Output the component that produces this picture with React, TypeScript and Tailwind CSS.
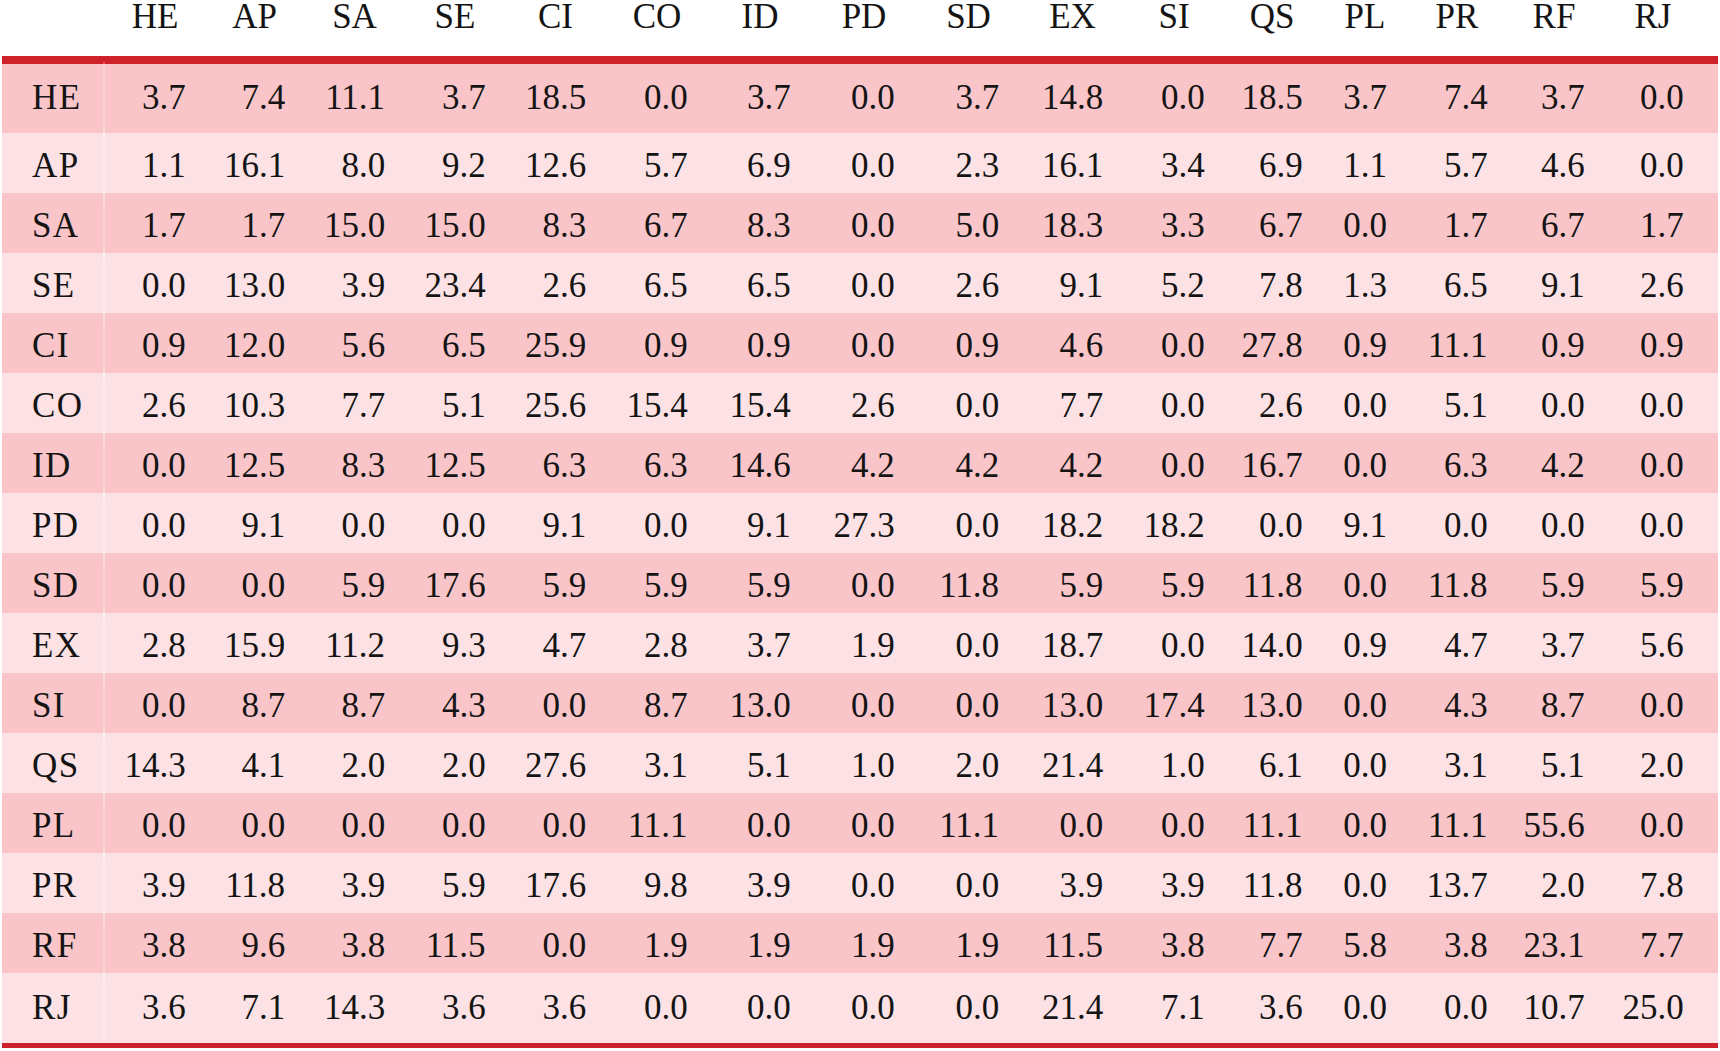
const codes = ['HE', 'AP', 'SA', 'SE', 'CI', 'CO', 'ID', 'PD', 'SD', 'EX', 'SI', 'QS', 'PL', 'PR', 'RF', 'RJ'];

const rows: [string, string[]][] = [
  ['HE', ['3.7', '7.4', '11.1', '3.7', '18.5', '0.0', '3.7', '0.0', '3.7', '14.8', '0.0', '18.5', '3.7', '7.4', '3.7', '0.0']],
  ['AP', ['1.1', '16.1', '8.0', '9.2', '12.6', '5.7', '6.9', '0.0', '2.3', '16.1', '3.4', '6.9', '1.1', '5.7', '4.6', '0.0']],
  ['SA', ['1.7', '1.7', '15.0', '15.0', '8.3', '6.7', '8.3', '0.0', '5.0', '18.3', '3.3', '6.7', '0.0', '1.7', '6.7', '1.7']],
  ['SE', ['0.0', '13.0', '3.9', '23.4', '2.6', '6.5', '6.5', '0.0', '2.6', '9.1', '5.2', '7.8', '1.3', '6.5', '9.1', '2.6']],
  ['CI', ['0.9', '12.0', '5.6', '6.5', '25.9', '0.9', '0.9', '0.0', '0.9', '4.6', '0.0', '27.8', '0.9', '11.1', '0.9', '0.9']],
  ['CO', ['2.6', '10.3', '7.7', '5.1', '25.6', '15.4', '15.4', '2.6', '0.0', '7.7', '0.0', '2.6', '0.0', '5.1', '0.0', '0.0']],
  ['ID', ['0.0', '12.5', '8.3', '12.5', '6.3', '6.3', '14.6', '4.2', '4.2', '4.2', '0.0', '16.7', '0.0', '6.3', '4.2', '0.0']],
  ['PD', ['0.0', '9.1', '0.0', '0.0', '9.1', '0.0', '9.1', '27.3', '0.0', '18.2', '18.2', '0.0', '9.1', '0.0', '0.0', '0.0']],
  ['SD', ['0.0', '0.0', '5.9', '17.6', '5.9', '5.9', '5.9', '0.0', '11.8', '5.9', '5.9', '11.8', '0.0', '11.8', '5.9', '5.9']],
  ['EX', ['2.8', '15.9', '11.2', '9.3', '4.7', '2.8', '3.7', '1.9', '0.0', '18.7', '0.0', '14.0', '0.9', '4.7', '3.7', '5.6']],
  ['SI', ['0.0', '8.7', '8.7', '4.3', '0.0', '8.7', '13.0', '0.0', '0.0', '13.0', '17.4', '13.0', '0.0', '4.3', '8.7', '0.0']],
  ['QS', ['14.3', '4.1', '2.0', '2.0', '27.6', '3.1', '5.1', '1.0', '2.0', '21.4', '1.0', '6.1', '0.0', '3.1', '5.1', '2.0']],
  ['PL', ['0.0', '0.0', '0.0', '0.0', '0.0', '11.1', '0.0', '0.0', '11.1', '0.0', '0.0', '11.1', '0.0', '11.1', '55.6', '0.0']],
  ['PR', ['3.9', '11.8', '3.9', '5.9', '17.6', '9.8', '3.9', '0.0', '0.0', '3.9', '3.9', '11.8', '0.0', '13.7', '2.0', '7.8']],
  ['RF', ['3.8', '9.6', '3.8', '11.5', '0.0', '1.9', '1.9', '1.9', '1.9', '11.5', '3.8', '7.7', '5.8', '3.8', '23.1', '7.7']],
  ['RJ', ['3.6', '7.1', '14.3', '3.6', '3.6', '0.0', '0.0', '0.0', '0.0', '21.4', '7.1', '3.6', '0.0', '0.0', '10.7', '25.0']],
];

const gridCols =
  'grid grid-cols-[103px_100px_99px_101px_100px_101px_102px_104px_104px_105px_103px_100px_96px_90px_94px_100px_98px_1fr]';

export default function App() {
  return (
    <div className="min-h-[1051px] bg-white px-[2px] text-[35px] text-[#141414] [font-family:'Liberation_Serif','Times_New_Roman',serif]">
      {/* header */}
      <div className={`${gridCols} h-[56px] leading-[33px]`}>
        <div />
        {codes.map((c) => (
          <div key={c} className="text-center">
            {c}
          </div>
        ))}
        <div />
      </div>
      <div className="h-[8px] bg-[#cf2129]" />

      {rows.map(([label, vals], i) => {
        const first = i === 0;
        const last = i === rows.length - 1;
        return (
          <div
            key={label}
            className={`${gridCols} leading-[55px] ${i % 2 === 0 ? 'bg-[#f9c5c9]' : 'bg-[#fce2e4]'} ${
              first ? 'pt-[6px] pb-[8px]' : last ? 'pt-[7px] pb-[8px]' : 'pt-[5px]'
            }`}
          >
            <div className="border-r-2 border-white/25 pl-[30px] tracking-[0.04em] -mt-[8px] -mb-[8px] py-[8px]">
              {label}
            </div>
            {vals.map((v, j) => (
              <div key={j} className="flex justify-center">
                <span className={`inline-block text-right ${codes[j] === 'PL' ? 'w-[1.25em]' : 'w-[1.75em]'}`}>
                  {v}
                </span>
              </div>
            ))}
            <div />
          </div>
        );
      })}
      <div className="h-[5px] bg-[#cf2129]" />
    </div>
  );
}
